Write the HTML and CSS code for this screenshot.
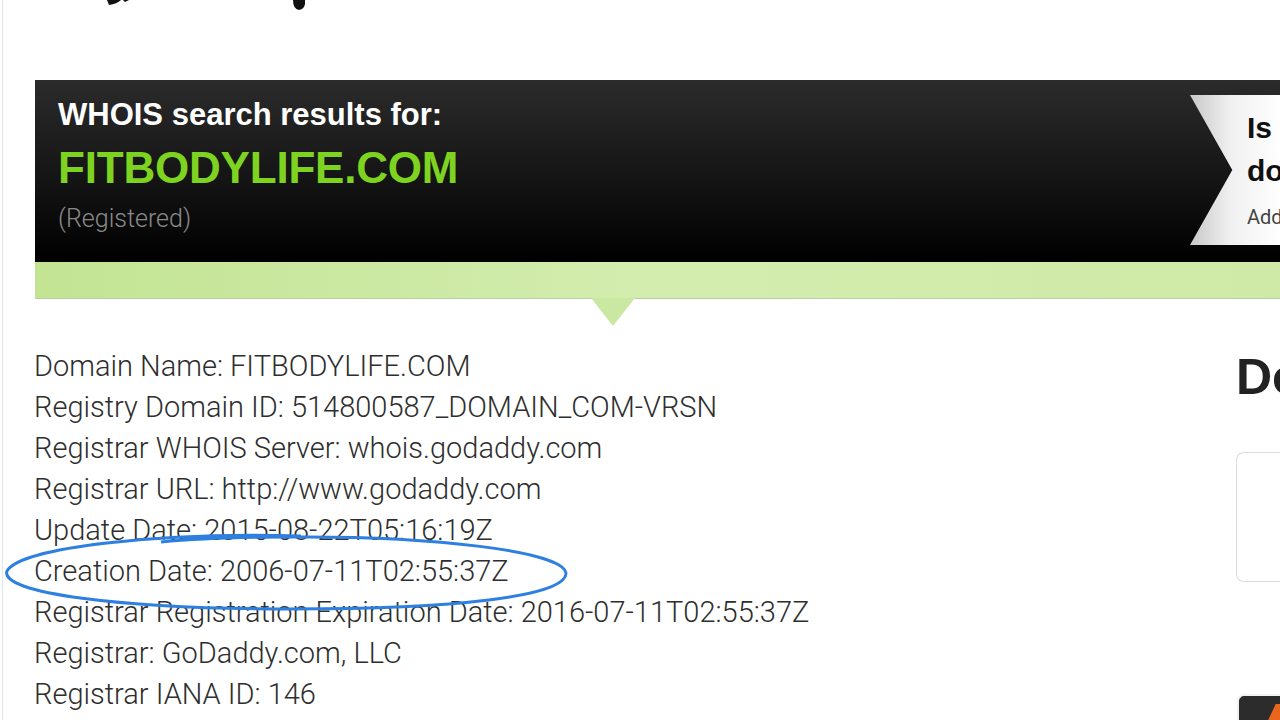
FILE: index.html
```html
<!DOCTYPE html>
<html>
	<head>
		<title>WHOIS search results</title>
		<link rel="stylesheet" href="styles.css">
	</head>

	<body>
		<div class="page">
			<!-- bottom of the hand drawn logo, cut off by the frame -->
			<div class="logo-strip">
				<svg width="400" height="20" viewBox="0 0 400 20">
					<path d="M104 0 L118 0 Q114 4 106 5 Z" fill="#111"/>
					<path d="M120 0 L126 0 L122 2 Z" fill="#111"/>
					<path d="M290 0 L302 0 Q303 9 296 10 Q290 9 290 0 Z" fill="#111"/>
				</svg>
			</div>

			<div class="result">
				<div class="result-head">
					<div class="result-title">
						<div class="label">WHOIS search results for:</div>
						<div class="domain">FITBODYLIFE.COM</div>
						<div class="status">(Registered)</div>
					</div>
					<div class="ribbon">
						<div class="ribbon-big">Is this your</div>
						<div class="ribbon-big">domain?</div>
						<div class="ribbon-small">Add hosting, email and more</div>
					</div>
				</div>
				<div class="result-bar"></div>
				<div class="pointer"></div>
			</div>

			<div class="lower">
				<div class="whois">
					<div class="line">Domain Name: FITBODYLIFE.COM</div>
					<div class="line">Registry Domain ID: 514800587_DOMAIN_COM-VRSN</div>
					<div class="line">Registrar WHOIS Server: whois.godaddy.com</div>
					<div class="line">Registrar URL: http://www.godaddy.com</div>
					<div class="line">Update Date: 2015-08-22T05:16:19Z</div>
					<div class="line">Creation Date: 2006-07-11T02:55:37Z</div>
					<div class="line">Registrar Registration Expiration Date: 2016-07-11T02:55:37Z</div>
					<div class="line">Registrar: GoDaddy.com, LLC</div>
					<div class="line">Registrar IANA ID: 146</div>

					<!-- hand drawn circle around the creation date -->
					<svg class="circle" width="580" height="90" viewBox="0 0 580 90">
						<path d="M300 7 C 160 3, 20 18, 6 42 C -2 64, 120 80, 290 80 C 450 80, 566 68, 565 44 C 562 22, 430 7, 290 8 C 230 8, 190 10, 160 13" fill="none" stroke="#2d7fe0" stroke-width="3"/>
					</svg>
				</div>

				<div class="side">
					<div class="side-title">Domain</div>
					<div class="side-box"></div>
					<div class="side-btn"><span class="btn-mark"></span></div>
				</div>
			</div>
		</div>
	</body>

</html>
```

FILE: styles.css
```css
body {
	margin: 0;
	background-color: white;
	font-family: "Liberation Sans", Arial, sans-serif;
	overflow: hidden;
}

/* the whole thing is a zoomed in shot, so it starts at the very left */

div.page {
	border-left: 1px solid #e4e4e4;
	margin-left: 2px;
	height: 720px;
	overflow: hidden;
}

div.logo-strip {
	height: 80px;
}

div.logo-strip svg {
	display: block;
}

div.result {
	margin-left: 32px;
	position: relative;
}

div.result-head {
	height: 182px;
	background: linear-gradient(#2b2b2b, #141414 55%, #000);
	display: flex;
	justify-content: space-between;
}

div.result-title {
	padding: 14px 0 0 23px;
}

div.label {
	color: white;
	font-weight: bold;
	font-size: 31px;
	line-height: 41px;
}

div.domain {
	color: #7ed321;
	font-weight: bold;
	font-size: 44px;
	line-height: 66px;
	letter-spacing: -0.2px;
}

div.status {
	color: #8a8a8a;
	font-family: Roboto, sans-serif;
	font-weight: 300;
	font-size: 25px;
	line-height: 32px;
	margin-top: 2px;
}

/* the grey ticket on the right, with a notch cut into its left side */

div.ribbon {
	margin-top: 15px;
	width: 90px;
	height: 150px;
	background: linear-gradient(90deg, #c8c8c8, #f0f0f0 45%, #ffffff);
	clip-path: polygon(0 0, 100% 0, 100% 100%, 0 100%, 47% 50%);
	padding: 11px 0 0 57px;
	box-sizing: border-box;
	overflow: hidden;
	white-space: nowrap;
}

div.ribbon-big {
	font-weight: bold;
	font-size: 30px;
	line-height: 43px;
	color: #111;
}

div.ribbon-small {
	font-family: Roboto, sans-serif;
	font-size: 20px;
	color: #444;
	margin-top: 13px;
}

div.result-bar {
	height: 36px;
	background: linear-gradient(90deg, #c3e493, #d3edaf 50%, #cfeaa6);
	border-bottom: 1px solid #b9cfa0;
}

div.pointer {
	position: absolute;
	left: 556px;
	top: 218px;
	width: 0;
	height: 0;
	border-left: 22px solid transparent;
	border-right: 22px solid transparent;
	border-top: 28px solid #cbe8a2;
}

div.lower {
	display: flex;
	justify-content: space-between;
	margin-top: 47px;
}

div.whois {
	position: relative;
	padding-left: 31px;
}

div.line {
	font-family: Roboto, sans-serif;
	font-weight: 300;
	font-size: 29px;
	line-height: 41px;
	color: #2e2e2e;
	white-space: nowrap;
}

svg.circle {
	position: absolute;
	left: -2px;
	top: 183px;
}

div.side {
	width: 44px;
	padding-top: 3px;
}

div.side-title {
	font-weight: bold;
	font-size: 50px;
	line-height: 56px;
	color: #222;
	white-space: nowrap;
}

div.side-box {
	margin-top: 47px;
	height: 128px;
	border: 1px solid #dcdcdc;
	border-right: none;
	border-radius: 8px 0 0 8px;
}

div.side-btn {
	margin-top: 112px;
	margin-left: 1px;
	height: 40px;
	border: 2px solid #f2f2f2;
	border-right: none;
	border-radius: 7px 0 0 7px;
	background-color: #2c2c2c;
	position: relative;
	overflow: hidden;
}

span.btn-mark {
	position: absolute;
	left: 32px;
	top: 8px;
	width: 12px;
	height: 20px;
	background-color: #e8661e;
	transform: skewX(-25deg);
}
```
